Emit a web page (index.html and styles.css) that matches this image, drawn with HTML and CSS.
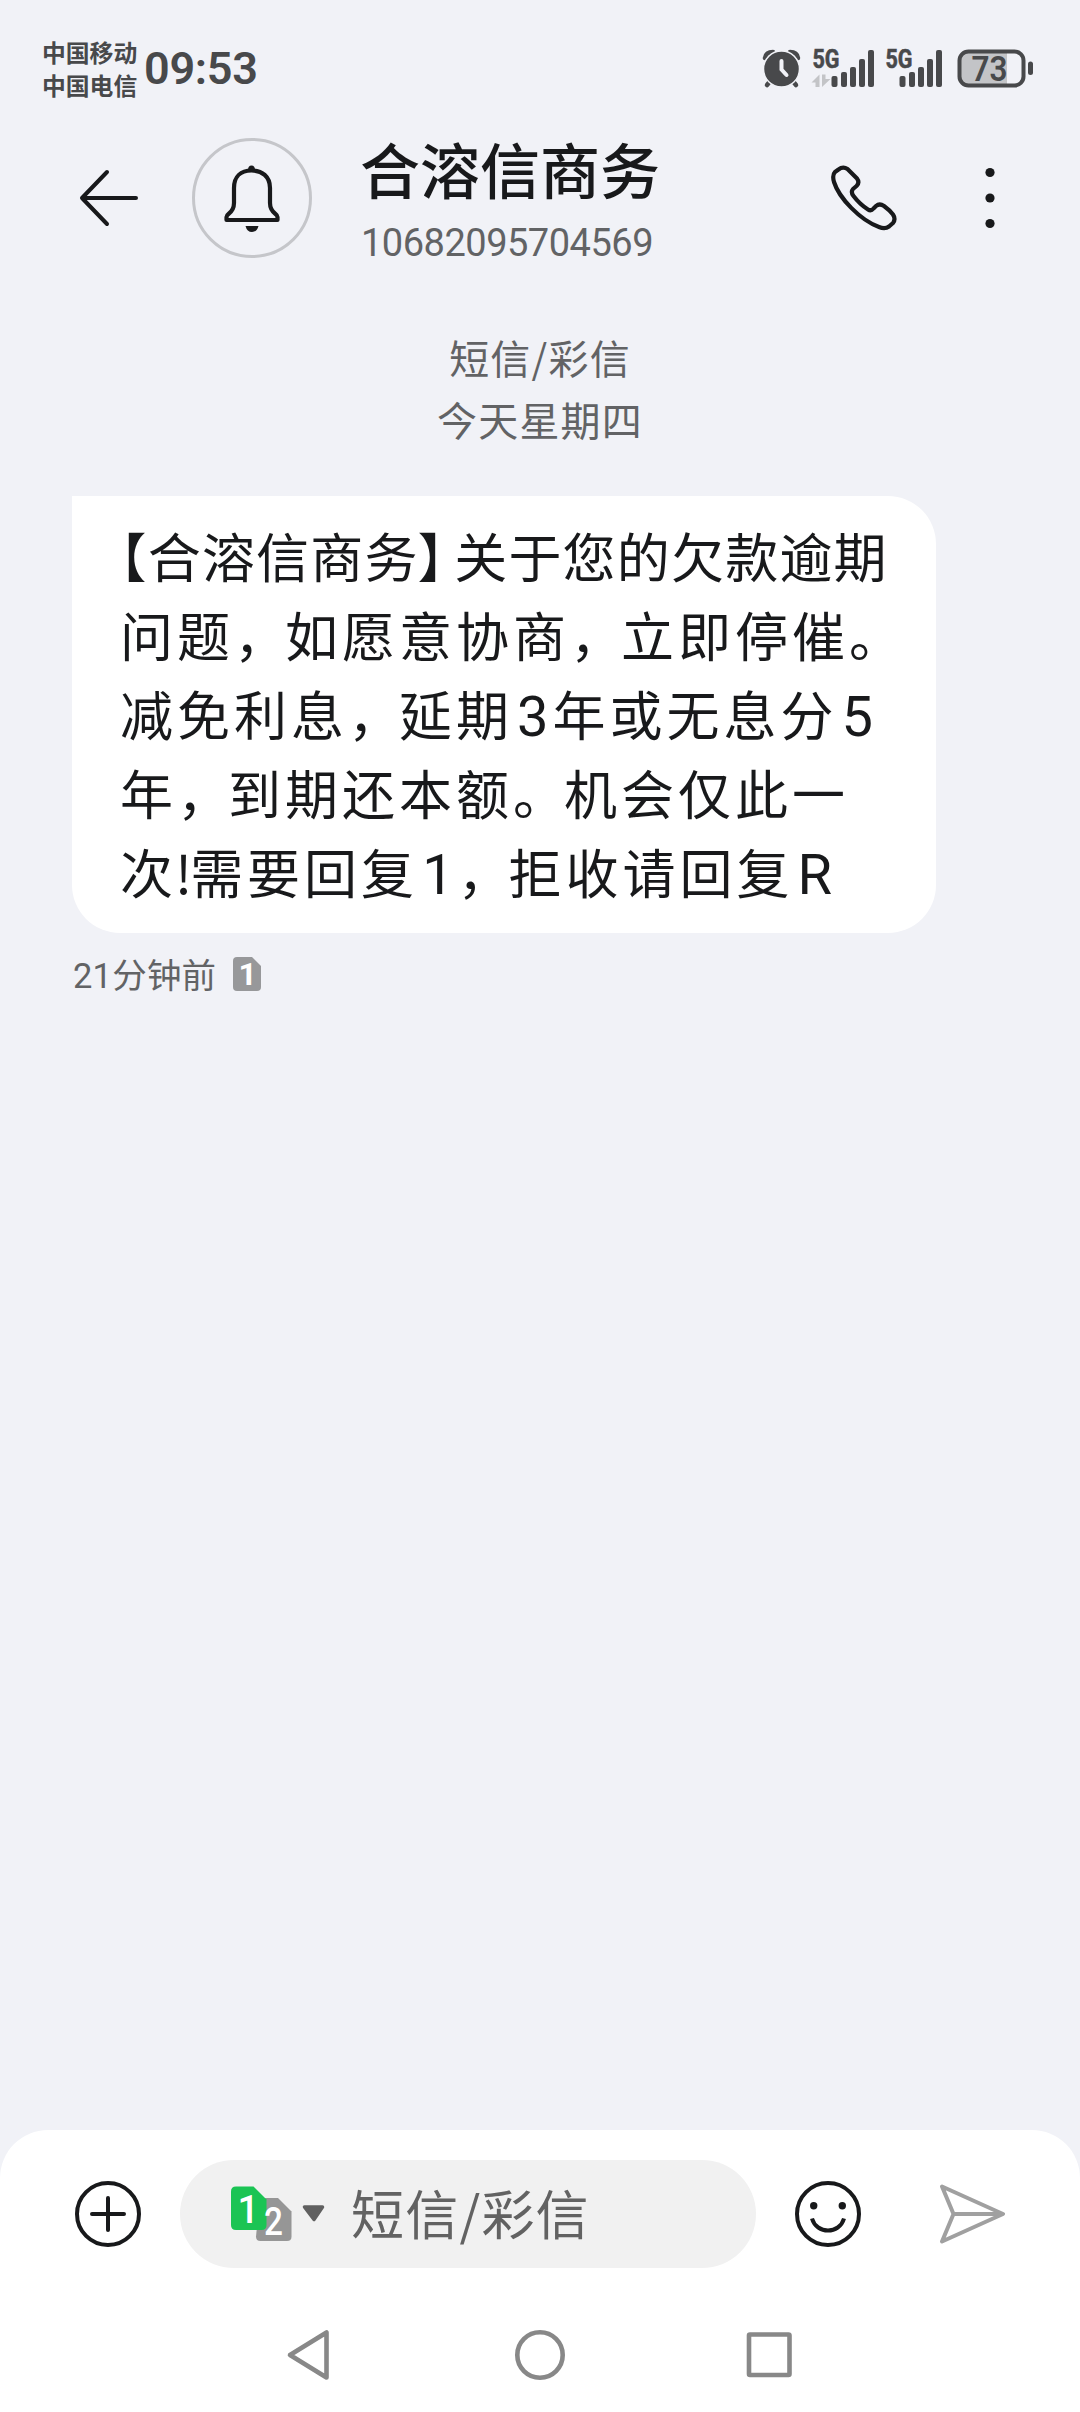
FILE: index.html
```html
<!DOCTYPE html>
<html lang="zh-CN">
<head>
<meta charset="utf-8">
<title>合溶信商务</title>
<link rel="stylesheet" href="styles.css">
</head>
<body>
<div class="screen">
  <div class="status">
    <div class="carriers"><span>中国移动</span><span>中国电信</span></div>
    <div class="clock">09:53</div>
    <svg class="status-icons" width="280" height="50" viewBox="760 42 280 50">
      <g fill="#48494b" stroke="#48494b">
        <path d="M767 84l5-6M796 84l-5-6" stroke-width="4.500" stroke-linecap="round" fill="none"/>
        <path d="M765 57q1-6 8-6M798 57q-1-6-8-6" stroke-width="4.500" stroke-linecap="round" fill="none"/>
        <circle cx="781.500" cy="68" r="18" stroke="#f1f2f7" stroke-width="1.500"/>
        <path d="M781.500 60v8.500l5 5.500" stroke="#f1f2f7" stroke-width="4" fill="none" stroke-linecap="round"/>
      </g>
      <g fill="#48494b">
        <rect x="831.500" y="75" width="6" height="11" rx="2"/><rect x="841" y="71" width="6" height="15" rx="2"/><rect x="850" y="66" width="6" height="20" rx="2"/><rect x="859" y="58" width="6" height="28" rx="2"/><rect x="868" y="49" width="6" height="37" rx="2"/>
        <rect x="899.500" y="75" width="6" height="11" rx="2"/><rect x="909" y="71" width="6" height="15" rx="2"/><rect x="918" y="66" width="6" height="20" rx="2"/><rect x="927" y="58" width="6" height="28" rx="2"/><rect x="936" y="49" width="6" height="37" rx="2"/>
        <text x="812.500" y="67" class="net" textLength="27" lengthAdjust="spacingAndGlyphs">5G</text>
        <text x="885.500" y="67" class="net" textLength="27" lengthAdjust="spacingAndGlyphs">5G</text>
      </g>
      <path d="M811.500 81.500l8-8v12.500h-4v-4.500zM822 73.500h3.500v4.500h5l-8.500 8z" fill="#c3c4c7"/>
      <path d="M970 50h37v34h-37q-10 0-10-10V60q0-10 10-10z" fill="#c3c4c7"/>
      <rect x="959.500" y="50.500" width="64" height="34" rx="9" fill="none" stroke="#48494b" stroke-width="4"/>
      <rect x="1028" y="60.500" width="5" height="13.500" rx="2.500" fill="#48494b"/>
      <text x="971.500" y="79.500" class="level" textLength="36" lengthAdjust="spacingAndGlyphs">73</text>
    </svg>
  </div>

  <header class="header">
    <svg class="back" width="60" height="60" viewBox="79 168 60 60" fill="none" stroke="#18191b" stroke-width="4" stroke-linecap="round" stroke-linejoin="round"><path d="M107 172L82 198l25 26M82 198h54"/></svg>
    <div class="avatar">
      <svg width="60" height="70" viewBox="222 163 60 70" fill="none" stroke="#18191b" stroke-width="4.200" stroke-linejoin="round"><path d="M226.500 220v-3q0-1.500 2-3c4-3 5.500-6 5.500-11v-15c0-11.500 7-17.500 17.500-17.500S270 176.500 270 188v15c0 5 1.500 8 5.500 11q2 1.500 2 3v3z"/><path d="M248 170q0-4.500 3.500-4.500t3.500 4.500z" fill="#18191b" stroke="none"/><path d="M245.500 226h13q-1.500 6-6.500 6t-6.500-6z" fill="#18191b" stroke="none"/></svg>
    </div>
    <div class="contact"><h1>合溶信商务</h1><p>10682095704569</p></div>
    <svg class="call" width="68" height="68" viewBox="830 164 68 68" fill="none" stroke="#18191b" stroke-width="4.200" stroke-linejoin="round"><path d="M838.500 169.500Q843 166 847.500 169L857 178.500Q860 182.500 856.500 186L853 189Q850.500 192 853.500 196Q860 204.500 868 209.500Q871 211.500 873.500 208.500L876 206Q879.500 203 884 206Q889.500 210 893 214.500Q896 219 893 223L889 226.500Q885 229.500 879 227C860 220 839 198 834 182Q832 175 835 172Z"/></svg>
    <svg class="more" width="12" height="62" viewBox="984 167 12 62" fill="#18191b"><circle cx="990" cy="172.500" r="4.600"/><circle cx="990" cy="198" r="4.600"/><circle cx="990" cy="223.500" r="4.600"/></svg>
  </header>

  <main class="thread">
    <div class="divider"><p>短信/彩信</p><p>今天星期四</p></div>
    <div class="bubble">
      <p class="line tight"><span class="open">【</span>合溶信商<span class="last">务</span><span class="close">】</span>关于您的欠款逾期</p>
      <p class="line">问题<span class="comma">，</span>如愿意协商<span class="comma">，</span>立即停催。</p>
      <p class="line">减免利息<span class="comma">，</span>延期<span class="num">3</span>年或无息分<span class="num">5</span></p>
      <p class="line">年<span class="comma">，</span>到期还本额<span class="comma">。</span>机会仅此一</p>
      <p class="line">次<span class="bang">!</span>需要回复<span class="num">1</span><span class="comma">，</span>拒收请回复<span class="num">R</span></p>
    </div>
    <div class="meta"><span>21分钟前</span>
      <svg class="slot" width="28" height="34" viewBox="0 0 28 34"><path d="M4 0h15l9 9v21q0 4-4 4H4q-4 0-4-4V4q0-4 4-4z" fill="#97989a"/><text x="5.500" y="28" class="sim sim-small">1</text></svg>
    </div>
  </main>

  <footer class="dock">
    <div class="composer">
      <svg class="add" width="66" height="66" viewBox="0 0 66 66" fill="none" stroke="#18191b" stroke-width="4"><circle cx="33" cy="33" r="31"/><path d="M33 17v32M17 33h32" stroke-linecap="round"/></svg>
      <div class="field">
        <svg width="62" height="56" viewBox="231 2186 62 56"><path d="M260 2198h18l13.500 13.500v25q0 4.500-4.500 4.500h-26.500q-4.500 0-4.500-4.500z" fill="#969696"/><path d="M236 2186.500h17.500l13 13v25.500q0 5-5 5H236q-5 0-5-5v-33.500q0-5 5-5z" fill="#1bc454"/><text x="237.500" y="2222.500" class="sim">1</text><text x="264" y="2234.500" class="sim" textLength="20" lengthAdjust="spacingAndGlyphs">2</text></svg>
        <svg class="caret" width="24" height="18" viewBox="0 0 24 18"><path d="M2.500 2h18L12 14.500z" fill="#606060" stroke="#606060" stroke-width="3.500" stroke-linejoin="round"/></svg>
        <span class="hint">短信/彩信</span>
      </div>
      <svg class="smile" width="66" height="66" viewBox="0 0 66 66" fill="none" stroke="#18191b" stroke-width="4"><circle cx="33" cy="33" r="31"/><path d="M17 37.500c4.500 16 27.500 16 32 0"/><circle cx="18.700" cy="24.700" r="3.700" fill="#18191b" stroke="none"/><circle cx="47.300" cy="24.700" r="3.700" fill="#18191b" stroke="none"/></svg>
      <svg class="send" width="66" height="62" viewBox="939 2183 66 62" fill="none" stroke="#a0a0a0" stroke-width="4" stroke-linejoin="round"><path d="M942 2186.500L1003 2214l-61 27.500L953.500 2214zM953.500 2214h48"/></svg>
    </div>
    <nav class="nav">
      <svg width="46" height="52" viewBox="0 0 46 52"><path d="M40.500 3.500v45L4 26z"/></svg>
      <svg width="52" height="52" viewBox="0 0 52 52"><circle cx="27" cy="26" r="22.700"/></svg>
      <svg width="48" height="52" viewBox="0 0 48 52"><rect x="4" y="5.500" width="40.500" height="40.500" rx="1"/></svg>
    </nav>
  </footer>
</div>
</body>
</html>
```

FILE: styles.css
```css
* { box-sizing: border-box; }
body, h1, p { margin: 0; }
body {
  background: #f1f2f7;
  font-family: Roboto, "Noto Sans CJK SC", sans-serif;
  color: #18191b;
}
svg { display: block; flex: none; }
.screen {
  width: 1080px;
  height: 2412px;
  display: flex;
  flex-direction: column;
  overflow: hidden;
}

.status {
  height: 118px;
  padding: 17px 40px 0 42px;
  display: flex;
  align-items: center;
  color: #48494b;
}
.carriers {
  width: 102px;
  display: flex;
  flex-direction: column;
  font: 700 23.8px/33px "Noto Sans CJK SC", sans-serif;
  white-space: nowrap;
}
.clock {
  padding-top: 2px;
  font-size: 45px;
  font-weight: 600;
  letter-spacing: -0.300px;
  line-height: 60px;
}
.status-icons { margin-left: auto; }
.net { font: 700 25px Roboto, sans-serif; stroke: #48494b; stroke-width: 0.600px; }
.level { font: 600 34.500px Roboto, sans-serif; fill: #48494b; }

.header {
  height: 160px;
  padding: 0 84px 0 79px;
  display: flex;
  align-items: center;
}
.avatar {
  width: 120px;
  height: 120px;
  margin-left: 53px;
  border: 3px solid #c5c6ca;
  border-radius: 50%;
  display: flex;
  align-items: center;
  justify-content: center;
}
.contact { margin-left: 48px; white-space: nowrap; }
.contact h1 { font: 500 60px/70px "Noto Sans CJK SC", sans-serif; }
.contact p {
  margin: 18px 0 -2px 1px;
  font-size: 38px;
  line-height: 44px;
  letter-spacing: -0.500px;
  color: #626365;
}
.call { margin-left: auto; }
.more { margin-left: 86px; }

.thread { flex: 1; padding-left: 72px; }
.divider {
  width: 936px;
  margin-top: 48px;
  text-align: center;
  font: 400 40px/62px "Noto Sans CJK SC", sans-serif;
  letter-spacing: 1.200px;
  color: #626365;
}
.bubble {
  width: 864px;
  height: 437px;
  margin-top: 46px;
  padding: 20px 0 0 48px;
  border-radius: 0 48px 48px 48px;
  background: #fff;
}
.line {
  height: 79.100px;
  font: 400 53px/79.100px "Noto Sans CJK SC", sans-serif;
  letter-spacing: 4px;
  white-space: nowrap;
}
.tight { letter-spacing: 1.200px; }
/* half-width brackets */
.open, .close { font-feature-settings: "halt"; }
.last { letter-spacing: 0; }
.close { margin-right: 9px; }
.comma { letter-spacing: 2.500px; margin-right: -4.500px; }
.bang { letter-spacing: 0; margin: 0 -2px 0 -2px; }
.num {
  margin-left: 4px;
  font-family: Roboto, sans-serif;
  font-size: 56px;
  line-height: 0;
}
.meta {
  display: flex;
  align-items: center;
  gap: 17px;
  margin-top: 16px;
  padding-left: 1px;
  height: 50px;
  font-size: 34.500px;
  letter-spacing: 0.200px;
  color: #626365;
}
.meta span { margin-top: -3px; }
.slot { overflow: visible; }
.sim { font: 500 38px Roboto, sans-serif; fill: #fff; }
.sim-small { font-size: 32px; font-weight: 700; }

.dock {
  height: 282px;
  background: #fff;
  border-radius: 48px 48px 0 0;
}
.composer {
  height: 168px;
  padding: 0 75px;
  display: flex;
  align-items: center;
}
.field {
  width: 576px;
  height: 108px;
  margin-left: 39px;
  padding-left: 51px;
  border-radius: 54px;
  background: #f1f1f1;
  display: flex;
  align-items: center;
  font: 400 53px/78px "Noto Sans CJK SC", sans-serif;
  letter-spacing: 1.200px;
  color: #626262;
}
.hint { margin-top: -4px; }
.caret { margin: 0 25px 0 9px; }
.smile { margin-left: 39px; }
.send { margin-left: 78px; }
.nav {
  padding: 31px 287px 0 286px;
  display: flex;
  justify-content: space-between;
}
.nav svg { fill: none; stroke: #888; stroke-width: 4.600; stroke-linejoin: round; }
```
